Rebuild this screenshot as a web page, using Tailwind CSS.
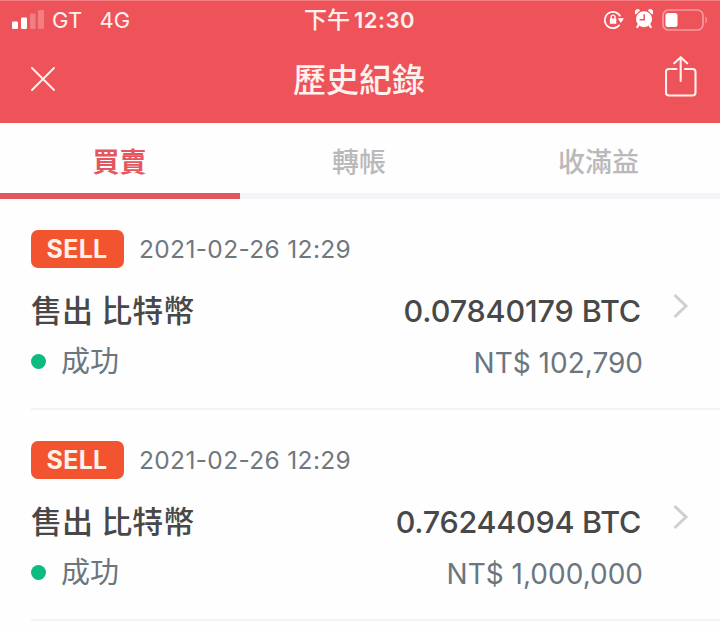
<!DOCTYPE html>
<html lang="zh-Hant">
<head>
<meta charset="utf-8">
<title>歷史紀錄</title>
<script src="https://cdn.jsdelivr.net/npm/@tailwindcss/browser@4"></script>
</head>
<body class="w-[720px] h-[630px] overflow-hidden bg-[#fefefe] font-['Inter','Noto_Sans_CJK_TC',sans-serif] whitespace-nowrap">
<header class="h-[123px] bg-[#ee5359] text-[#fff1ee] border-t border-[#f37f83]">
  <div class="h-[38px] grid grid-cols-3 items-center pl-3 pr-[12px]">
    <div class="flex items-center">
      <svg class="w-8 h-5" viewBox="0 0 32 20" fill="#fff"><rect x="0" y="11.5" width="6" height="7.5" rx="1.2"/><rect x="9" y="7.5" width="6" height="11.5" rx="1.2"/><rect x="18" y="3.5" width="5.5" height="15.5" rx="1.2" opacity=".25"/><rect x="26" y="0" width="6" height="19" rx="1.2" opacity=".25"/></svg>
      <span class="ml-2 text-[22px] leading-none tracking-[0.2px]">GT</span>
      <span class="ml-[17px] text-[22px] leading-none tracking-[0.2px]">4G</span>
    </div>
    <div class="flex items-center justify-center text-[22px] leading-none">
      <span class="font-medium text-[23px] -ml-[1px]">下午</span><span class="ml-1 font-semibold tracking-[0.5px]">12:30</span>
    </div>
    <div class="flex items-center justify-end">
      <svg class="w-5 h-5" viewBox="0 0 20 20" fill="none" stroke="#fff" stroke-width="1.7"><path d="M16.300 6.400A8.200 8.200 0 1 0 15.600 14.800"/><path d="M13.700 8.300h6.200l-3 4.600z" fill="#fff" stroke="none"/><rect x="5.900" y="8.600" width="6.400" height="5.200" rx=".6" fill="#fff" stroke="none"/><path d="M7.200 9V7.100a1.900 1.900 0 0 1 3.800 0V9" stroke-width="1.300"/></svg>
      <svg class="w-[18px] h-[20px] ml-[11px] mb-[2px]" viewBox="0 0 18 20" fill="#fff"><circle cx="9" cy="10.200" r="8"/><path d="M.6 5.200a2.700 2.700 0 0 1 4.200-3.800zM17.400 5.200a2.700 2.700 0 0 0-4.200-3.800z" stroke="#fff" stroke-width=".8"/><path d="M3.500 16 2.300 18M14.500 16l1.200 2" stroke="#fff" stroke-width="2.200" stroke-linecap="round"/><path d="M9.200 5.200v5.500H4.600" fill="none" stroke="#ee5359" stroke-width="1.500"/></svg>
      <svg class="w-[46px] h-[22px] ml-[9px] mb-[1px]" viewBox="0 0 46 22"><rect x="1" y="1" width="40" height="20" rx="5.500" fill="none" stroke="#f69a9c" stroke-width="1.700"/><rect x="3.500" y="4" width="12" height="14" rx="2.500" fill="#fff"/><path d="M43.500 7.500c2 1.300 2 5.700 0 7z" fill="#f69a9c"/></svg>
    </div>
  </div>
  <div class="h-[84px] grid grid-cols-3 items-center pl-[31px] pr-[23px]">
    <svg class="w-6 h-6 mb-[5px]" viewBox="0 0 24 24" fill="none" stroke="#fff1ee" stroke-width="1.900" stroke-linecap="round"><path d="M1 1 23 23M23 1 1 23"/></svg>
    <h1 class="justify-self-center mb-[1px] -ml-[10px] text-[33px] leading-none font-medium">歷史紀錄</h1>
    <svg class="justify-self-end w-8 h-[42px] mb-[9px]" viewBox="0 0 32 42" fill="none" stroke="#fff1ee" stroke-width="2.100" stroke-linecap="round" stroke-linejoin="round"><path d="M11.500 13H4Q1 13 1 16V36.500Q1 39.500 4 39.500H27.500Q30.500 39.500 30.500 36.500V16Q30.500 13 27.500 13H20M15.700 25V1.500M9.200 7.300 15.700 1.200 22.200 7.300"/></svg>
  </div>
</header>
<nav class="h-[76px] grid grid-cols-3 text-[27px] leading-none text-[#b9b9b9]">
  <div class="flex items-center justify-center border-b-[6px] border-[#e4575e] text-[#e4575e] font-bold pt-[8px] pr-[1px]">買賣</div>
  <div class="flex items-center justify-center border-b-[6px] border-[#f3f3f8] font-medium pt-[8px] pr-[2px]">轉帳</div>
  <div class="flex items-center justify-center border-b-[6px] border-[#f3f3f8] font-medium pt-[8px] pr-[3px]">收滿益</div>
</nav>
<main class="pl-[31px]">
  <article class="h-[211px] pt-[31px] border-b-2 border-[#f3f3f3]">
    <div class="flex items-center h-[38px]">
      <span class="w-[93px] h-[38px] rounded-[7px] bg-[#f35430] text-[#fff1e8] text-[25px] font-bold leading-none flex items-center justify-center tracking-[0.3px] pr-px pt-px">SELL</span>
      <time class="ml-[15px] pt-px text-[24.500px] leading-none text-[#70787e] tracking-[0.350px]">2021-02-26 12:29</time>
    </div>
    <div class="flex">
      <div class="flex-1">
        <div class="flex items-center justify-between h-[52px] mt-[16px] text-[#484848] font-medium">
          <span class="text-[31px] leading-none">售出 比特幣</span><span class="pt-[2px] text-[30.500px] leading-none tracking-[-0.120px]">0.07840179 BTC</span>
        </div>
        <div class="flex items-center justify-between h-[50px] text-[#6b767e]">
          <span class="flex items-center"><i class="w-[15px] h-[15px] rounded-full bg-[#0dba80] mr-[15px]"></i><span class="text-[29px] leading-none">成功</span></span><span class="-mr-[2px] pt-[3px] text-[28px] leading-none">NT$ 102,790</span>
        </div>
      </div>
      <svg class="w-4 h-[26px] mt-[25px] ml-[32px] mr-[31px]" viewBox="0 0 16 26" fill="none" stroke="#cfcfd1" stroke-width="3"><path d="M1.500 2 13 13 1.500 24"/></svg>
    </div>
  </article>
  <article class="h-[211px] pt-[31px] border-b-2 border-[#f3f3f3]">
    <div class="flex items-center h-[38px]">
      <span class="w-[93px] h-[38px] rounded-[7px] bg-[#f35430] text-[#fff1e8] text-[25px] font-bold leading-none flex items-center justify-center tracking-[0.3px] pr-px pt-px">SELL</span>
      <time class="ml-[15px] pt-px text-[24.500px] leading-none text-[#70787e] tracking-[0.350px]">2021-02-26 12:29</time>
    </div>
    <div class="flex">
      <div class="flex-1">
        <div class="flex items-center justify-between h-[52px] mt-[16px] text-[#484848] font-medium">
          <span class="text-[31px] leading-none">售出 比特幣</span><span class="pt-[2px] text-[30.500px] leading-none tracking-[-0.250px]">0.76244094 BTC</span>
        </div>
        <div class="flex items-center justify-between h-[50px] text-[#6b767e]">
          <span class="flex items-center"><i class="w-[15px] h-[15px] rounded-full bg-[#0dba80] mr-[15px]"></i><span class="text-[29px] leading-none">成功</span></span><span class="-mr-[2px] pt-[3px] text-[28px] leading-none">NT$ 1,000,000</span>
        </div>
      </div>
      <svg class="w-4 h-[26px] mt-[25px] ml-[32px] mr-[31px]" viewBox="0 0 16 26" fill="none" stroke="#cfcfd1" stroke-width="3"><path d="M1.500 2 13 13 1.500 24"/></svg>
    </div>
  </article>
</main>
</body>
</html>
